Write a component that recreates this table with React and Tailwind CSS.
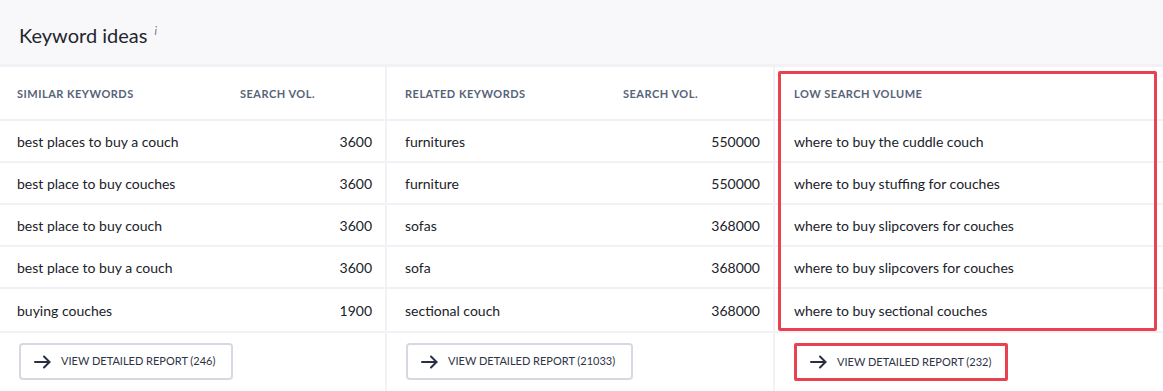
const columns = [
  {
    title: 'Similar keywords',
    volAt: 'w-[223px]',
    rows: [
      ['best places to buy a couch', '3600'],
      ['best place to buy couches', '3600'],
      ['best place to buy couch', '3600'],
      ['best place to buy a couch', '3600'],
      ['buying couches', '1900'],
    ],
    report: 'View detailed report (246)',
  },
  {
    title: 'Related keywords',
    volAt: 'w-[218px]',
    rows: [
      ['furnitures', '550000'],
      ['furniture', '550000'],
      ['sofas', '368000'],
      ['sofa', '368000'],
      ['sectional couch', '368000'],
    ],
    report: 'View detailed report (21033)',
  },
  {
    title: 'Low search volume',
    rows: [
      ['where to buy the cuddle couch'],
      ['where to buy stuffing for couches'],
      ['where to buy slipcovers for couches'],
      ['where to buy slipcovers for couches'],
      ['where to buy sectional couches'],
    ],
    report: 'View detailed report (232)',
  },
];

const headCls = 'text-[11px] font-bold uppercase tracking-[0.045em] text-[#566378]';

const Arrow = () => (
  <svg width="17" height="14" viewBox="0 0 17 14" fill="none" stroke="#2a3042" strokeWidth="2" strokeLinecap="round" strokeLinejoin="round">
    <path d="M1 7H15.5" />
    <path d="M10 1.5L15.5 7L10 12.5" />
  </svg>
);

const Column = ({ col, highlight, pl }) => (
  <div className="relative flex flex-col flex-1 min-w-0 bg-white">
    {highlight && (
      <div className="absolute left-[3px] right-[6px] top-[4px] h-[260px] border-[3px] border-[#e8414f] rounded-[2px] pointer-events-none" />
    )}
    <div className={`flex items-center h-[54px] pt-[3px] border-b-2 border-[#f1f1f6] ${pl}`}>
      <div className={`${col.volAt || ''} ${headCls}`}>{col.title}</div>
      {col.volAt && <div className={headCls}>Search vol.</div>}
    </div>
    {col.rows.map((r, i) => (
      <div
        key={i}
        className={`flex items-center justify-between h-[42px] pr-[13px] text-[14px] text-[#202229] ${pl} ${i < col.rows.length - 1 ? 'border-b-2 border-[#f1f1f6]' : ''}`}
      >
        <span>{r[0]}</span>
        {r[1] && <span>{r[1]}</span>}
      </div>
    ))}
    <div className="border-t-2 border-[#f1f1f6] flex items-start h-[60px] pt-[10px] pl-[19px]">
      <button
        className={`flex items-center gap-[10px] text-[11px] uppercase text-[#2e3446] bg-white ${
          highlight ? 'h-[38px] border-[3px] border-[#e8414f] rounded-[2px] pl-[13px] pr-[14px]' : 'h-[37px] pl-[13px] pr-[16px] border-2 border-[#d8d8e3] rounded-[4px]'
        }`}
      >
        <Arrow />
        <span>{col.report}</span>
      </button>
    </div>
  </div>
);

export default function App() {
  return (
    <div className="w-[1163px] h-[391px] overflow-hidden bg-[#f1f1f6]" style={{ fontFamily: 'Lato, "Noto Sans", sans-serif' }}>
      <div className="h-[64px] bg-[#f8f8fb] flex items-center pl-[19px] pt-[6px] mb-[3px]">
        <h2 className="text-[20px] text-[#24262e] leading-none">
          Keyword ideas
          <span className="relative -top-[8px] ml-[7px] italic text-[11px] text-[#6b7280]">i</span>
        </h2>
      </div>
      <div className="flex gap-[2px]">
        <div className="flex w-[385px]"><Column col={columns[0]} pl="pl-[17px]" /></div>
        <div className="flex w-[386px]"><Column col={columns[1]} pl="pl-[18px]" /></div>
        <div className="flex flex-1"><Column col={columns[2]} pl="pl-[19px]" highlight /></div>
      </div>
    </div>
  );
}
